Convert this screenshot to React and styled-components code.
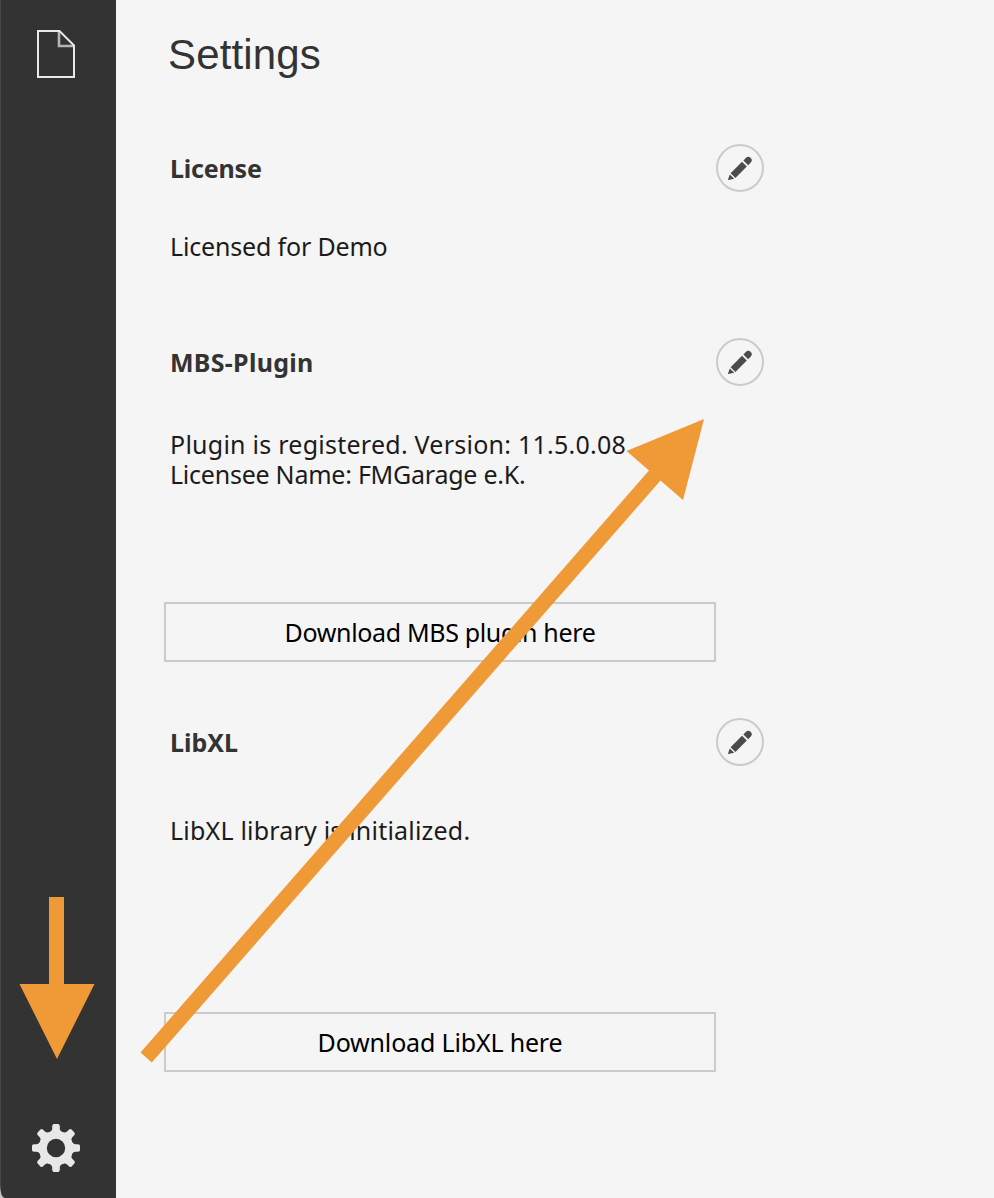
import React from "react";
import styled, { createGlobalStyle } from "styled-components";

const GlobalStyle = createGlobalStyle`
  * { box-sizing: border-box; }
  body {
    margin: 0;
    background: #f5f5f5;
    font-family: "Noto Sans", "Open Sans", sans-serif;
  }
`;

const Window = styled.div`
  position: relative;
  display: flex;
  width: 994px;
  height: 1198px;
  overflow: hidden;
  background: #f5f5f5;
`;

const SidebarBack = styled.div`
  width: 116px;
  flex: none;
  background: #c4c4c4;
`;

const Sidebar = styled.nav`
  display: flex;
  flex-direction: column;
  justify-content: space-between;
  height: 100%;
  padding: 29px 0 26px 32px;
  background: linear-gradient(to right, #484848 1px, #333333 1px);
  border-bottom-left-radius: 5px 13px;
`;

const NavButton = styled.button`
  display: block;
  width: 48px;
  height: ${(p) => p.$height}px;
  padding: 0;
  border: 0;
  background: none;

  svg { display: block; }
`;

const Content = styled.main`
  width: 600px;
  margin-left: 48px;
`;

const Title = styled.h1`
  height: 50px;
  margin: 30px 0 64px 4px;
  color: #333;
  font: 400 42px/50px "Liberation Sans", Arial, sans-serif;
  letter-spacing: 0.15px;
  white-space: nowrap;
`;

const Section = styled.section`
  display: flex;
  flex-direction: column;
  height: ${(p) => p.$height}px;
  margin-bottom: ${(p) => p.$after || 0}px;
`;

const SectionHeader = styled.header`
  display: flex;
  align-items: center;
  justify-content: space-between;
  height: 48px;
  padding-left: 6px;
`;

const SectionTitle = styled.h2`
  margin: 0;
  color: #333;
  font-size: 25px;
  font-weight: 700;
  line-height: 30px;
  letter-spacing: ${(p) => p.$spacing}px;
`;

const EditButton = styled.button`
  display: grid;
  place-items: center;
  width: 48px;
  height: 48px;
  padding: 0;
  border: 2px solid #cbcbcb;
  border-radius: 50%;
  background: #f5f5f5;
`;

const Status = styled.div`
  margin: ${(p) => p.$gap}px 0 0 6px;
`;

const Line = styled.p`
  width: max-content;
  margin: 0;
  color: #1b1b1b;
  font-size: 25px;
  line-height: 30px;
  white-space: nowrap;
  letter-spacing: ${(p) => p.$spacing}px;
`;

const DownloadButton = styled.button`
  width: 552px;
  height: 60px;
  margin-top: auto;
  padding: 0 0 1px;
  border: 2px solid #cbcbcb;
  background: #f5f5f5;
  color: #000;
  font: 400 25px/30px "Noto Sans", "Open Sans", sans-serif;
  letter-spacing: ${(p) => p.$spacing}px;
`;

const Annotations = styled.svg`
  position: absolute;
  inset: 0;
  pointer-events: none;
`;

const FileIcon = () => (
  <svg width="48" height="49" viewBox="0 0 48 49" fill="none">
    <path d="M27 2v15h15" stroke="#b5b5b5" strokeWidth="2.6" />
    <path d="M6 2h21.5L42 16.5V48H6z" stroke="#e9e9e9" strokeWidth="2" />
  </svg>
);

const toothAngles = [0, 45, 90, 135, 180, 225, 270, 315];

const GearIcon = () => (
  <svg width="48" height="48" viewBox="-24 -24 48 48">
    <circle r="13.2" fill="none" stroke="#e8e8e8" strokeWidth="8" />
    {toothAngles.map((angle) => (
      <path
        key={angle}
        transform={`rotate(${angle})`}
        d="M-7.2 -15.4C-4.8 -16.4 -3.8 -18 -3.8 -19.5V-22Q-3.6 -24 -2 -24H2Q3.6 -24 3.8 -22V-19.5C3.8 -18 4.8 -16.4 7.2 -15.4Z"
        fill="#e8e8e8"
      />
    ))}
  </svg>
);

const PencilIcon = () => (
  <svg width="28" height="28" viewBox="0 0 28 28" fill="#4b4b4b">
    <path d="M4.6 19.2L16 7.8L20.8 12.6L9.4 24Z" />
    <path d="M17.4 6.4L20 3.8Q22.2 1.6 24.6 3.8Q27 6.2 24.8 8.6L22.2 11.2Z" />
    <path d="M3.8 20.4L8.2 24.8L2.2 26Q1.8 26 2 25.4Z" />
  </svg>
);

const SectionHead = ({ title, spacing }) => (
  <SectionHeader>
    <SectionTitle $spacing={spacing}>{title}</SectionTitle>
    <EditButton aria-label={`Edit ${title}`}>
      <PencilIcon />
    </EditButton>
  </SectionHeader>
);

export default function App() {
  return (
    <Window>
      <GlobalStyle />
      <SidebarBack>
        <Sidebar>
          <NavButton $height={49} aria-label="Files"><FileIcon /></NavButton>
          <NavButton $height={48} aria-label="Settings"><GearIcon /></NavButton>
        </Sidebar>
      </SidebarBack>
      <Content>
        <Title>Settings</Title>
        <Section $height={194}>
          <SectionHead title="License" spacing={-0.2} />
          <Status $gap={39}>
            <Line $spacing={-0.17}>Licensed for Demo</Line>
          </Status>
        </Section>
        <Section $height={324} $after={56}>
          <SectionHead title="MBS-Plugin" spacing={0.28} />
          <Status $gap={43}>
            <Line $spacing={0.25}>Plugin is registered. Version: 11.5.0.08</Line>
            <Line $spacing={-0.24}>Licensee Name: FMGarage e.K.</Line>
          </Status>
          <DownloadButton $spacing={-0.34}>Download MBS plugin here</DownloadButton>
        </Section>
        <Section $height={354}>
          <SectionHead title="LibXL" spacing={0} />
          <Status $gap={49}>
            <Line $spacing={0.2}>LibXL library is initialized.</Line>
          </Status>
          <DownloadButton $spacing={-0.17}>Download LibXL here</DownloadButton>
        </Section>
      </Content>
      <Annotations width="994" height="1198" viewBox="0 0 994 1198" fill="#f09937">
        <path d="M49 897H64V984H94.5L57 1059L19.5 984H49Z" />
        <path d="M704 419L683 500L660.5 480.5L151.8 1062.5L140.5 1052.5L649 470.5L626.5 451Z" />
      </Annotations>
    </Window>
  );
}
